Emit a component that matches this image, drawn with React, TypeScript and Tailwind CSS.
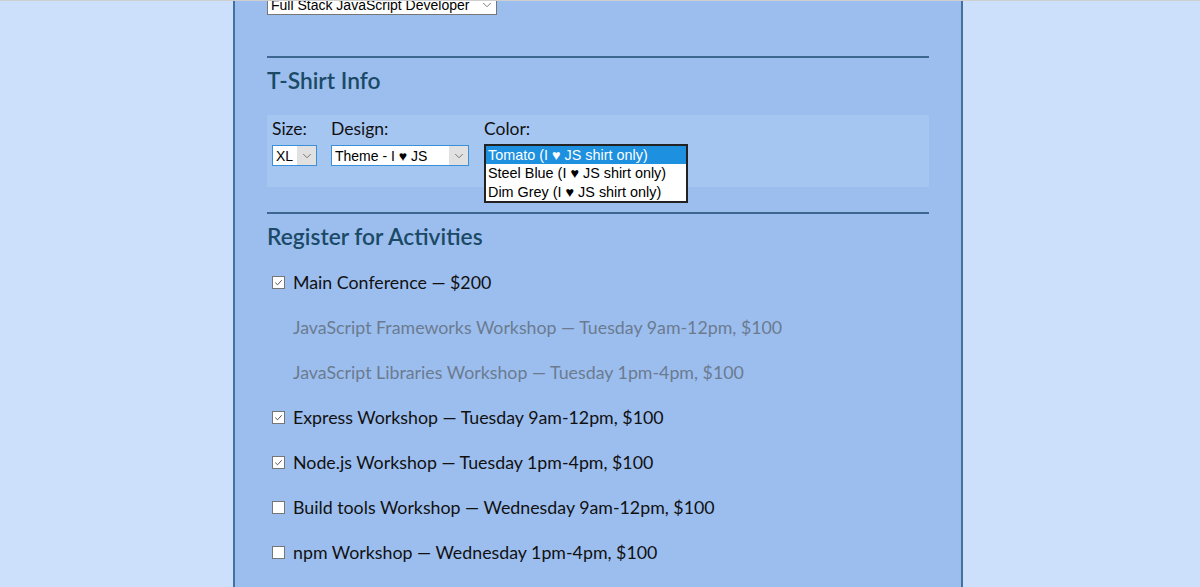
import { ChevronDown } from "lucide-react";

interface Activity {
  label: string;
  checked: boolean;
  disabled?: boolean;
}

const activities: Activity[] = [
  { label: "Main Conference — $200", checked: true },
  { label: "JavaScript Frameworks Workshop — Tuesday 9am-12pm, $100", checked: false, disabled: true },
  { label: "JavaScript Libraries Workshop — Tuesday 1pm-4pm, $100", checked: false, disabled: true },
  { label: "Express Workshop — Tuesday 9am-12pm, $100", checked: true },
  { label: "Node.js Workshop — Tuesday 1pm-4pm, $100", checked: true },
  { label: "Build tools Workshop — Wednesday 9am-12pm, $100", checked: false },
  { label: "npm Workshop — Wednesday 1pm-4pm, $100", checked: false },
];

const selectFont = { fontFamily: '"Liberation Sans", Arial, sans-serif' };

// Fake native select box
const SelectBox = ({ value, width }: { value: string; width: string }) => (
  <div
    className={`flex h-[21px] items-center justify-between border border-[#3a8fd8] bg-white ${width} whitespace-nowrap text-[14px] leading-none text-black`}
    style={selectFont}
  >
    <span className="pl-[3px]">{value}</span>
    <span className="flex h-full w-[19px] items-center justify-center bg-[#e1e1e1]">
      <ChevronDown className="h-[14px] w-[14px] text-[#555]" strokeWidth={1.3} />
    </span>
  </div>
);

const Checkbox = ({ checked }: { checked: boolean }) => (
  <span className="flex h-[13px] w-[13px] shrink-0 items-center justify-center border border-[#767676] bg-white">
    {checked && (
      <svg viewBox="0 0 12 12" className="h-[11px] w-[11px]">
        <path d="M2.5 6.2 L5 8.5 L9.5 3.5" fill="none" stroke="#444" strokeWidth="1" />
      </svg>
    )}
  </span>
);

export default function App() {
  return (
    <div
      className="h-[587px] overflow-hidden border-t border-[#cfcfcf] bg-[#cde0fb]"
      style={{ fontFamily: 'Lato, "Noto Sans", sans-serif' }}
    >
      <div className="ml-[233px] flex h-full w-[730px] flex-col border-x-2 border-[#42709f] bg-[#9cbeef] pl-[32px]">
        <div className="flex w-[662px] flex-col">
          {/* Job role select, scrolled mostly out of view */}
          <div
            className="-mt-[7px] flex h-[21px] w-[230px] items-center justify-between whitespace-nowrap border border-[#767676] bg-white text-[14px] leading-none text-black"
            style={selectFont}
          >
            <span className="pl-[3px]">Full Stack JavaScript Developer</span>
            <ChevronDown className="mr-[2px] h-[14px] w-[14px] text-[#555]" strokeWidth={1.3} />
          </div>

          <hr className="mt-[41px] border-t-2 border-[#3d6791]" />

          {/* T-Shirt section */}
          <h2 className="mt-[8px] text-[22.8px] font-semibold leading-[28px] text-[#1b4a66]">T-Shirt Info</h2>

          <div className="mt-[21px] flex h-[72px] gap-[14px] bg-[#a6c6f2] pl-[5px] pt-[3px]">
            <div className="flex flex-col">
              <span className="text-[17.5px] leading-[22px] text-[#111]">Size:</span>
              <div className="mt-[5px]">
                <SelectBox value="XL" width="w-[45px]" />
              </div>
            </div>
            <div className="flex flex-col">
              <span className="text-[17.5px] leading-[22px] text-[#111]">Design:</span>
              <div className="mt-[5px]">
                <SelectBox value="Theme - I ♥ JS" width="w-[138px]" />
              </div>
            </div>
            <div className="ml-[1px] flex flex-col">
              <span className="text-[17.5px] leading-[22px] text-[#111]">Color:</span>
              <div
                className="mt-[4px] flex w-[204px] flex-col border-2 border-[#222] bg-white text-[14.4px] leading-[18.3px] text-black"
                style={selectFont}
              >
                <span className="bg-[#1e90e0] pl-[2px] text-white">Tomato (I ♥ JS shirt only)</span>
                <span className="pl-[2px]">Steel Blue (I ♥ JS shirt only)</span>
                <span className="pl-[2px]">Dim Grey (I ♥ JS shirt only)</span>
              </div>
            </div>
          </div>

          <hr className="mt-[25px] border-t-2 border-[#3d6791]" />

          {/* Activities section */}
          <h2 className="mt-[8px] text-[22.8px] font-semibold leading-[28px] text-[#1b4a66]">Register for Activities</h2>

          <div className="mt-[10px] flex flex-col">
            {activities.map((a) => (
              <label key={a.label} className="flex h-[45px] shrink-0 items-center gap-[8px] pl-[5px]">
                {a.disabled ? <span className="w-[13px]" /> : <Checkbox checked={a.checked} />}
                <span className={`whitespace-nowrap text-[17.8px] ${a.disabled ? "text-[#6b7b8f]" : "text-[#111]"}`}>
                  {a.label}
                </span>
              </label>
            ))}
          </div>
        </div>
      </div>
    </div>
  );
}
